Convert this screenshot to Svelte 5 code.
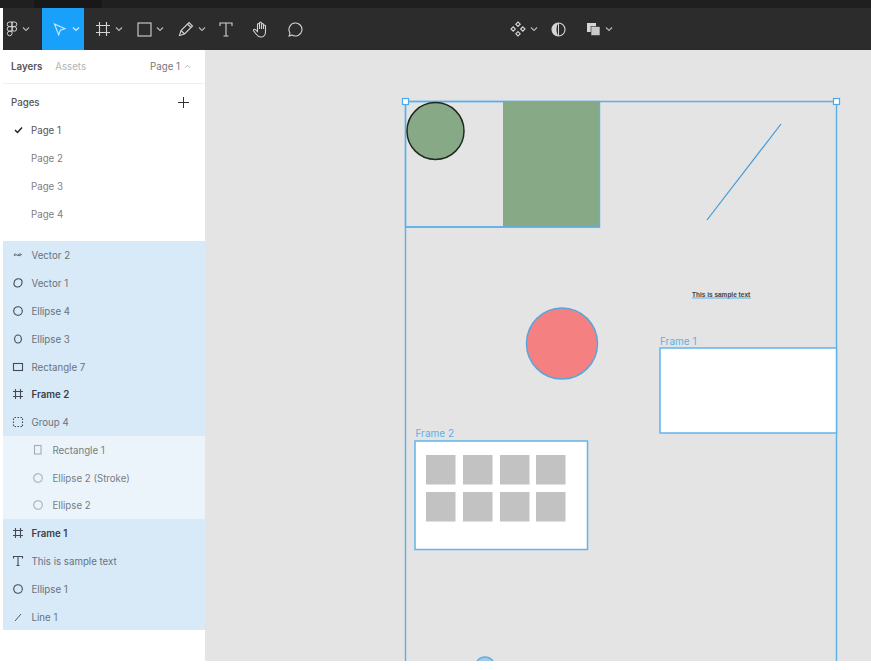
<script>
  const pages = [
    { name: 'Page 1', current: true },
    { name: 'Page 2' },
    { name: 'Page 3' },
    { name: 'Page 4' }
  ];
  const layers = [
    { name: 'Vector 2', icon: 'squiggle' },
    { name: 'Vector 1', icon: 'blob' },
    { name: 'Ellipse 4', icon: 'circle' },
    { name: 'Ellipse 3', icon: 'oval' },
    { name: 'Rectangle 7', icon: 'rect' },
    { name: 'Frame 2', icon: 'frame', bold: true },
    { name: 'Group 4', icon: 'group' },
    { name: 'Rectangle 1', icon: 'tallrect', child: true },
    { name: 'Ellipse 2 (Stroke)', icon: 'circle', child: true },
    { name: 'Ellipse 2', icon: 'circle', child: true },
    { name: 'Frame 1', icon: 'frame', bold: true },
    { name: 'This is sample text', icon: 'text' },
    { name: 'Ellipse 1', icon: 'circle' },
    { name: 'Line 1', icon: 'line' }
  ];
  const grayX = [426, 463, 500, 536];
  const grayY = [455, 492];
</script>

{#snippet chevron()}
  <svg class="chev" width="8" height="6" viewBox="0 0 8 6"><path d="M1 1.5 4 4.5 7 1.5" fill="none" stroke="currentColor" stroke-width="1.2"/></svg>
{/snippet}

{#snippet layerIcon(kind)}
  <svg width="14" height="14" viewBox="0 0 14 14" fill="none" stroke="currentColor" stroke-width="1.1">
    {#if kind === 'squiggle'}
      <path d="M3.500 6.200c1.300-.9 2.200 1.800 3.500.9s2-1.600 3.500-.6M3.500 6.200c-.9.800 0 1.800 1 1.400M7 7.100c.9.900 2.500.8 3.500-.6" stroke-width="0.9"/>
    {:else if kind === 'blob'}
      <path d="M7.500 2.800c2.500 0 4 1.700 3.500 4.200-.5 2.500-2.600 4.200-5 4-2.200-.2-3.400-2-3-4 .4-2.400 2-4.200 4.500-4.200Z"/>
    {:else if kind === 'circle'}
      <circle cx="7" cy="7" r="4.300"/>
    {:else if kind === 'oval'}
      <ellipse cx="7" cy="7" rx="3.400" ry="4"/>
    {:else if kind === 'rect'}
      <rect x="2.500" y="3.500" width="9" height="7"/>
    {:else if kind === 'tallrect'}
      <rect x="3.500" y="2.500" width="6.500" height="8.500"/>
    {:else if kind === 'frame'}
      <path d="M4.500 2v10M9.500 2v10M2 4.500h10M2 9.500h10"/>
    {:else if kind === 'group'}
      <path d="M2.500 3.500v1.500M2.500 6.500v1.500M2.500 9.500v1.500M11.500 3.500v1.500M11.500 6.500v1.500M11.500 9.500v1.500M3.500 2.500h1.500M6.500 2.500h1.500M9.500 2.500h1.500M3.500 11.500h1.500M6.500 11.500h1.500M9.500 11.500h1.500"/>
    {:else if kind === 'text'}
      <path d="M7 2.500v9M2.500 4.500v-2h9v2M5.500 11.500h3"/>
    {:else if kind === 'line'}
      <path d="M4 11 10 4" stroke-width="0.9"/>
    {/if}
  </svg>
{/snippet}

<div class="page">
  <div class="tabstrip"><span class="tab"></span></div>
  <div class="body">
    <header class="toolbar">
      <div class="tools">
        <button class="tool logo">
          <svg width="12" height="16" viewBox="0 0 12 16" fill="none" stroke="currentColor" stroke-width="1"><path d="M6 1H3.500a2.300 2.300 0 0 0 0 4.600H6ZM6 1h2.500a2.300 2.300 0 0 1 0 4.600H6ZM6 5.600H3.500a2.300 2.300 0 0 0 0 4.600H6ZM6 10.200H3.500A2.300 2.300 0 1 0 6 12.500ZM6 7.900a2.300 2.300 0 1 0 4.600 0 2.300 2.300 0 0 0-4.600 0Z"/></svg>
          {@render chevron()}
        </button>
        <button class="tool active">
          <svg width="15" height="15" viewBox="0 0 15 15" fill="none" stroke="currentColor" stroke-width="1.100"><path d="M2.500 2 13 6.700 8.300 8.300 6.700 13Z"/></svg>
          {@render chevron()}
        </button>
        <button class="tool frame">
          <svg width="16" height="16" viewBox="0 0 16 16" fill="none" stroke="currentColor" stroke-width="1.100"><path d="M4.500 1v14M11.500 1v14M1 4.500h14M1 11.500h14"/></svg>
          {@render chevron()}
        </button>
        <button class="tool rect">
          <svg width="15" height="15" viewBox="0 0 15 15" fill="none" stroke="currentColor" stroke-width="1.100"><rect x="1" y="1" width="13" height="13"/></svg>
          {@render chevron()}
        </button>
        <button class="tool pen">
          <svg width="16" height="16" viewBox="0 0 16 16" fill="none" stroke="currentColor" stroke-width="1.100"><path d="M1.500 14.500 3 9.500 11 1.500 14.500 5 6.500 13ZM9.500 3l3.500 3.500M3 9.500 6.500 13"/></svg>
          {@render chevron()}
        </button>
        <button class="tool type">
          <svg width="14" height="15" viewBox="0 0 14 15" fill="none" stroke="currentColor" stroke-width="1.100"><path d="M7 1v13M1 4V1h12v3M4.500 14h5"/></svg>
        </button>
        <button class="tool hand">
          <svg width="18" height="18" viewBox="0 0 18 18" fill="none" stroke="currentColor" stroke-width="1.100"><path d="M5.500 9V4.500a1 1 0 0 1 2 0V3a1 1 0 0 1 2 0v1.500a1 1 0 0 1 2 0V6a1 1 0 0 1 2 0v6c0 3-2 5-4.500 5-2.200 0-3.300-.8-4.500-2.500L1.700 11c-.7-1.200.7-2.300 1.700-1.400L5.500 11.500V9M7.500 4.500V9M9.500 4V9M11.500 5.500V9"/></svg>
        </button>
        <button class="tool comment">
          <svg width="16" height="16" viewBox="0 0 16 16" fill="none" stroke="currentColor" stroke-width="1.100"><path d="M2 15c.8-1 1-2.200.8-3.300A6.500 6.500 0 1 1 5 14C4 14.700 3 15 2 15Z"/></svg>
        </button>
      </div>
      <div class="center">
        <span class="ctool comp">
          <svg width="16" height="16" viewBox="0 0 16 16" fill="none" stroke="currentColor" stroke-width="1.100"><path d="M8 1l2.200 2.200L8 5.400 5.800 3.200ZM8 10.600l2.200 2.200L8 15l-2.200-2.200ZM3.200 5.800 5.400 8l-2.200 2.200L1 8ZM12.800 5.800 15 8l-2.200 2.200L10.600 8Z"/></svg>
          {@render chevron()}
        </span>
        <span class="ctool mask">
          <svg width="15" height="15" viewBox="0 0 15 15"><circle cx="7.500" cy="7.500" r="6.500" fill="none" stroke="currentColor" stroke-width="1.100"/><path d="M7.500 1a6.500 6.500 0 0 0 0 13c-1.500-2-2-4-2-6.500S6 3 7.500 1Z" fill="currentColor"/><path d="M7.500 1v13" stroke="currentColor"/></svg>
        </span>
        <span class="ctool bool">
          <svg width="15" height="14" viewBox="0 0 15 14"><rect x="1" y="1" width="9" height="9" fill="currentColor"/><rect x="5" y="4.500" width="9" height="9" fill="#c9c9c9" stroke="#2c2c2c" stroke-width=".6"/></svg>
          {@render chevron()}
        </span>
      </div>
    </header>

    <div class="main">
      <aside class="sidebar">
        <div class="tabs">
          <span class="tab-on">Layers</span>
          <span class="tab-off">Assets</span>
          <span class="pagepick">Page 1 <svg width="7" height="5" viewBox="0 0 7 5"><path d="M1 3.800 3.500 1.300 6 3.800" fill="none" stroke="#b5b5b5" stroke-width="1"/></svg></span>
        </div>
        <div class="pages-head">
          <span>Pages</span>
          <svg width="11" height="11" viewBox="0 0 11 11"><path d="M5.500 0v11M0 5.500h11" stroke="#333" stroke-width="1"/></svg>
        </div>
        <ul class="pages">
          {#each pages as p}
            <li class:current={p.current}>
              <span class="check">
                {#if p.current}
                  <svg width="9" height="8" viewBox="0 0 9 8"><path d="M1 4 3.500 6.500 8 1.500" fill="none" stroke="#222" stroke-width="1.500"/></svg>
                {/if}
              </span>
              {p.name}
            </li>
          {/each}
        </ul>
        <ul class="layers">
          {#each layers as l}
            <li class:child={l.child} class:bold={l.bold}>
              <span class="licon">{@render layerIcon(l.icon)}</span>
              <span class="lname">{l.name}</span>
            </li>
          {/each}
        </ul>
      </aside>

      <div class="canvas">
        <svg class="art" viewBox="205 50 666 611" width="666" height="611">
          <circle class="sel" cx="485" cy="667" r="10"/>
          <path class="sel" d="M405.500 661V101.500H836.500V661"/>
          <rect class="sel" x="405.500" y="101.500" width="193.500" height="125.500"/>
          <rect x="503" y="102" width="96" height="125" fill="#87a986"/>
          <path class="sel" d="M405.500 227H599.500V101.500"/>
          <circle cx="435.500" cy="131" r="28.500" fill="#87a986" stroke="#1f2a22" stroke-width="1.500"/>
          <path d="M707 220 781 124" stroke="#3f9bd8" stroke-width="1.200" fill="none"/>
          <text class="sample" x="692" y="297">This is sample text</text>
          <path d="M692 298H751" stroke="#5fb0e6" stroke-width="1"/>
          <circle cx="562" cy="343.500" r="35.500" fill="#f58081" stroke="#5aa5dc" stroke-width="1.500"/>
          <text class="flabel" x="660" y="345">Frame 1</text>
          <rect class="fr" x="660" y="348" width="176.500" height="85"/>
          <text class="flabel" x="415.500" y="437">Frame 2</text>
          <rect class="fr" x="415" y="441" width="172.500" height="108.500"/>
          {#each grayY as y}
            {#each grayX as x}
              <rect {x} {y} width="29.500" height="29.500" fill="#c2c2c2"/>
            {/each}
          {/each}
          <rect class="handle" x="402.500" y="98.500" width="6" height="6"/>
          <rect class="handle" x="833.500" y="98.500" width="6" height="6"/>
        </svg>
      </div>
    </div>
  </div>
  <div class="foot"></div>
</div>

<style>
  :global(body) {
    margin: 0;
    background: #fff;
  }
  .page {
    width: 871px;
    height: 670px;
    display: flex;
    flex-direction: column;
    overflow: hidden;
    font-family: Inter, "Liberation Sans", sans-serif;
    font-size: 9.700px;
    color: #555;
  }
  .tabstrip {
    height: 8px;
    background: #1f1f1f;
    flex: none;
    padding-left: 34px;
  }
  .tab {
    display: block;
    width: 68px;
    height: 8px;
    background: #181818;
  }
  .body {
    flex: none;
    display: flex;
    flex-direction: column;
    padding-left: 3px;
  }
  .toolbar {
    height: 42px;
    flex: none;
    background: #2c2c2c;
    position: relative;
    display: flex;
    align-items: center;
    color: #d4d4d4;
  }
  .tools {
    display: flex;
    height: 100%;
  }
  .tool {
    background: none;
    border: 0;
    padding: 0;
    color: inherit;
    display: flex;
    align-items: center;
    justify-content: flex-start;
    height: 100%;
    flex: none;
    box-sizing: border-box;
  }
  .chev {
    color: #b5b5b5;
  }
  .logo { width: 39px; padding-left: 3px; gap: 4px; }
  .active { width: 42px; padding-left: 10px; gap: 5px; background: #18a0fb; color: #cfeafc; }
  .active .chev { color: #d5eefe; }
  .frame { width: 40px; padding-left: 11px; gap: 4px; }
  .rect { width: 41px; padding-left: 12.500px; gap: 4.500px; }
  .pen { width: 41px; padding-left: 12.500px; gap: 4.500px; }
  .type { width: 40px; justify-content: center; }
  .hand { width: 30px; justify-content: center; }
  .comment { width: 38px; justify-content: center; }
  .center {
    position: absolute;
    left: 507px;
    top: 0;
    height: 100%;
    display: flex;
    align-items: center;
    color: #d6d6d6;
  }
  .ctool { display: flex; align-items: center; gap: 4px; }
  .comp { width: 41px; }
  .mask { width: 35px; }
  .bool { gap: 4px; }
  .main {
    display: flex;
    height: 611px;
  }
  .sidebar {
    width: 202px;
    flex: none;
    background: #fff;
  }
  .tabs {
    height: 34px;
    box-sizing: border-box;
    border-bottom: 1px solid #efefef;
    display: flex;
    align-items: center;
    padding: 0 14px 0 8px;
    gap: 13px;
  }
  .tab-on { font-weight: 600; color: #555; }
  .tab-off { color: #b3b3b3; }
  .pagepick { margin-left: auto; color: #777; display: flex; align-items: center; gap: 4px; }
  .pages-head {
    height: 32px;
    display: flex;
    align-items: center;
    justify-content: space-between;
    padding: 4px 16px 0 8px;
    box-sizing: border-box;
    font-weight: 500;
    color: #555;
  }
  ul {
    list-style: none;
    margin: 0;
    padding: 0;
  }
  .pages li {
    height: 28px;
    display: flex;
    align-items: center;
    color: #808080;
  }
  .pages li.current { color: #555; }
  .check {
    width: 28px;
    display: flex;
    justify-content: flex-end;
    padding-right: 8px;
    box-sizing: border-box;
  }
  .pages {
    margin-bottom: 13px;
  }
  .layers {
    background: #d8e9f7;
    height: 389px;
    display: grid;
    grid-auto-rows: 1fr;
  }
  .layers li {
    display: flex;
    align-items: center;
    color: #69727b;
  }
  .lname {
    padding-top: 2px;
  }
  .licon {
    width: 28.500px;
    display: flex;
    justify-content: center;
    padding-left: 1px;
    padding-top: 1px;
    box-sizing: border-box;
    color: #444b52;
  }
  .layers li.bold { font-weight: 600; color: #3a3f45; }
  .layers li.child {
    background: #ebf4fb;
    padding-left: 21px;
    color: #777c81;
  }
  .layers li.child .licon { color: #a8acb0; padding-left: 0; }
  .canvas {
    flex: 1;
    background: #e4e4e4;
    overflow: hidden;
  }
  .art { display: block; }
  .sel { fill: none; stroke: #5cb0ea; stroke-width: 1.400; }
  circle.sel { fill: #a9c9e2; }
  .fr { fill: #fff; stroke: #62b4ec; stroke-width: 1.500; }
  .flabel { font-size: 10px; fill: #5cb0ea; font-family: Inter, "Liberation Sans", sans-serif; }
  .sample { font-size: 6.500px; font-weight: 600; fill: #444; font-family: "Liberation Sans", sans-serif; }
  .handle { fill: #fff; stroke: #4fa8e8; stroke-width: 1.200; }
  .foot {
    height: 9px;
    flex: none;
    background: #fff;
  }
</style>
